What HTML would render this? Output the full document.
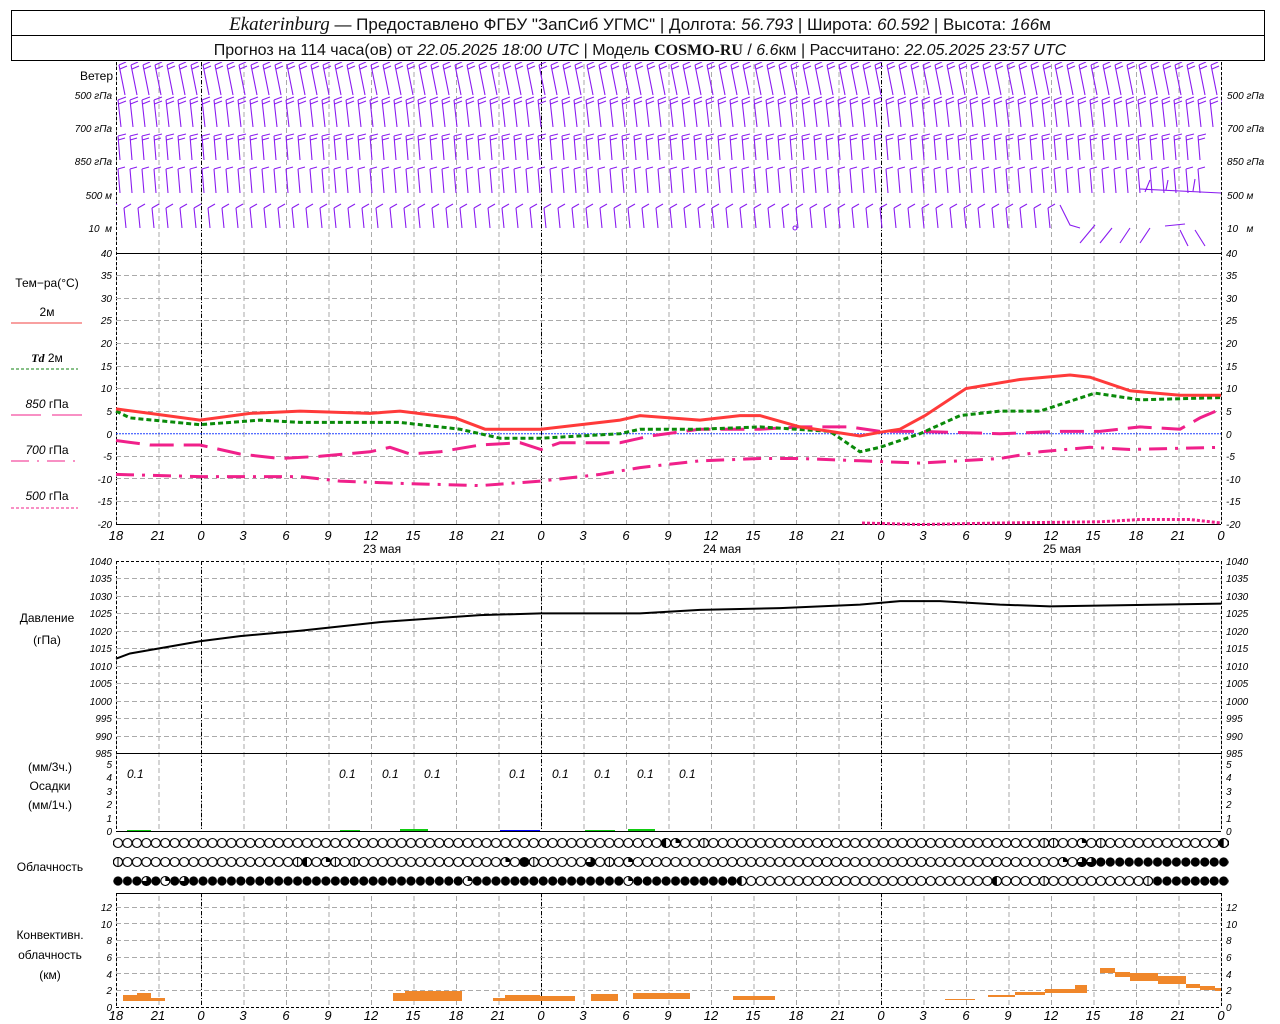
<!DOCTYPE html>
<html><head><meta charset="utf-8"><style>
html,body{margin:0;padding:0;background:#fff;}
svg{display:block;font-family:"Liberation Sans",sans-serif;}
.l{font-size:10px;font-style:italic;}
.t{font-size:12px;}
</style></head><body>
<svg width="1280" height="1024" viewBox="0 0 1280 1024" xmlns="http://www.w3.org/2000/svg">
<defs>
<pattern id="vg" patternUnits="userSpaceOnUse" x="116" y="0" width="42.5" height="1024"><line x1="0.5" y1="0" x2="0.5" y2="1024" stroke="#aaa" stroke-dasharray="5,3"/></pattern>
<pattern id="w0" patternUnits="userSpaceOnUse" x="116" y="62" width="12" height="34"><g stroke="#8a1cf0" stroke-width="1.1" fill="none"><path d="M9,33L3,3M3,3L10,0M4,7L11,4"/></g></pattern>
<pattern id="w1" patternUnits="userSpaceOnUse" x="116" y="96" width="12" height="33"><g stroke="#8a1cf0" stroke-width="1.1" fill="none"><path d="M5,31L2,4M2,4L10,1M2.5,8L10,5"/></g></pattern>
<pattern id="w2" patternUnits="userSpaceOnUse" x="116" y="133" width="12" height="29"><g stroke="#8a1cf0" stroke-width="1.1" fill="none"><path d="M4,27L2,3M2,3L10,1M2.3,7L9,5"/></g></pattern>
<pattern id="w3" patternUnits="userSpaceOnUse" x="116" y="166" width="12" height="29"><g stroke="#8a1cf0" stroke-width="1.1" fill="none"><path d="M4,27L2,3M2,3L9,1"/></g></pattern>
<pattern id="w4" patternUnits="userSpaceOnUse" x="122" y="203" width="14" height="27"><g stroke="#8a1cf0" stroke-width="1.1" fill="none"><path d="M4,25L2,5M2,5L9,1"/></g></pattern>
<pattern id="ce" patternUnits="userSpaceOnUse" x="113.275" y="0" width="9.45" height="1024"><circle cx="4.725" cy="843" r="4.5" fill="#fff" stroke="#000" stroke-width="1.1"/><circle cx="4.725" cy="862" r="4.5" fill="#fff" stroke="#000" stroke-width="1.1"/><circle cx="4.725" cy="881" r="4.5" fill="#fff" stroke="#000" stroke-width="1.1"/></pattern>
<pattern id="cf" patternUnits="userSpaceOnUse" x="113.275" y="0" width="9.45" height="1024"><circle cx="4.725" cy="881" r="4.6" fill="#000"/><circle cx="4.725" cy="862" r="4.6" fill="#000"/></pattern>
<g id="o"><circle r="4.5" fill="#fff" stroke="#000" stroke-width="1.1"/></g>
<g id="h"><circle r="4.5" fill="#fff" stroke="#000" stroke-width="1.1"/><path d="M0,-4.6A4.6,4.6 0 0 0 0,4.6Z" fill="#000"/></g>
<g id="q"><circle r="4.5" fill="#fff" stroke="#000" stroke-width="1.1"/><path d="M0,0L0,-4.6A4.6,4.6 0 0 1 4.6,0Z" fill="#000"/></g>
<g id="t"><circle r="4.5" fill="#fff" stroke="#000" stroke-width="1.1"/><path d="M0,0L0,-4.6A4.6,4.6 0 1 1 -4.6,0Z" fill="#000"/></g>
<g id="v"><circle r="4.5" fill="#fff" stroke="#000" stroke-width="1.1"/><line x1="0" y1="-4.5" x2="0" y2="4.5" stroke="#000"/></g>
<g id="f"><circle r="4.6" fill="#000"/></g>
</defs>
<rect x="0" y="0" width="1280" height="1024" fill="#fff"/>
<rect x="11.5" y="10.5" width="1253" height="50" fill="none" stroke="#000"/>
<line x1="11" y1="35.5" x2="1265" y2="35.5" stroke="#000"/>
<text x="640" y="30" text-anchor="middle" font-size="17" fill="#111"><tspan font-family="Liberation Serif" font-style="italic" font-size="19">Ekaterinburg</tspan> — Предоставлено ФГБУ "ЗапСиб УГМС" | Долгота: <tspan font-style="italic">56.793</tspan> | Широта: <tspan font-style="italic">60.592</tspan> | Высота: <tspan font-style="italic">166</tspan>м</text>
<text x="640" y="55" text-anchor="middle" font-size="16" fill="#111">Прогноз на 114 часа(ов) от <tspan font-style="italic">22.05.2025 18:00 UTC</tspan> | Модель <tspan font-family="Liberation Serif" font-weight="bold">COSMO-RU</tspan> / <tspan font-style="italic">6.6</tspan>км | Рассчитано: <tspan font-style="italic">22.05.2025 23:57 UTC</tspan></text>

<!-- vertical grids -->
<rect x="116" y="62" width="1106" height="191" fill="url(#vg)"/>
<rect x="116" y="253" width="1106" height="271" fill="url(#vg)"/>
<rect x="116" y="561" width="1106" height="270" fill="url(#vg)"/>
<rect x="116" y="893" width="1106" height="114" fill="url(#vg)"/>
<g stroke="#000" stroke-dasharray="4,2,1,2">
<line x1="201.5" y1="62" x2="201.5" y2="524"/><line x1="541.5" y1="62" x2="541.5" y2="524"/><line x1="881.5" y1="62" x2="881.5" y2="524"/>
<line x1="201.5" y1="561" x2="201.5" y2="831"/><line x1="541.5" y1="561" x2="541.5" y2="831"/><line x1="881.5" y1="561" x2="881.5" y2="831"/>
<line x1="201.5" y1="893" x2="201.5" y2="1007"/><line x1="541.5" y1="893" x2="541.5" y2="1007"/><line x1="881.5" y1="893" x2="881.5" y2="1007"/>
</g>
<g stroke="#000" stroke-dasharray="3,2">
<line x1="116.5" y1="62" x2="116.5" y2="524"/><line x1="1221.5" y1="62" x2="1221.5" y2="524"/>
<line x1="116.5" y1="561" x2="116.5" y2="831"/><line x1="1221.5" y1="561" x2="1221.5" y2="831"/>
<line x1="116.5" y1="893" x2="116.5" y2="1007"/><line x1="1221.5" y1="893" x2="1221.5" y2="1007"/>
</g>
<!-- horizontal grid -->
<g stroke="#aaa" stroke-dasharray="5,3">
<line x1="116" y1="275.5" x2="1221" y2="275.5"/><line x1="116" y1="298.5" x2="1221" y2="298.5"/><line x1="116" y1="320.5" x2="1221" y2="320.5"/><line x1="116" y1="343.5" x2="1221" y2="343.5"/><line x1="116" y1="366.5" x2="1221" y2="366.5"/><line x1="116" y1="388.5" x2="1221" y2="388.5"/><line x1="116" y1="411.5" x2="1221" y2="411.5"/><line x1="116" y1="456.5" x2="1221" y2="456.5"/><line x1="116" y1="478.5" x2="1221" y2="478.5"/><line x1="116" y1="501.5" x2="1221" y2="501.5"/>
<line x1="116" y1="578.5" x2="1221" y2="578.5"/><line x1="116" y1="596.5" x2="1221" y2="596.5"/><line x1="116" y1="613.5" x2="1221" y2="613.5"/><line x1="116" y1="631.5" x2="1221" y2="631.5"/><line x1="116" y1="648.5" x2="1221" y2="648.5"/><line x1="116" y1="666.5" x2="1221" y2="666.5"/><line x1="116" y1="683.5" x2="1221" y2="683.5"/><line x1="116" y1="701.5" x2="1221" y2="701.5"/><line x1="116" y1="718.5" x2="1221" y2="718.5"/><line x1="116" y1="736.5" x2="1221" y2="736.5"/>
<line x1="116" y1="990.5" x2="1221" y2="990.5"/><line x1="116" y1="973.5" x2="1221" y2="973.5"/><line x1="116" y1="957.5" x2="1221" y2="957.5"/><line x1="116" y1="940.5" x2="1221" y2="940.5"/><line x1="116" y1="923.5" x2="1221" y2="923.5"/><line x1="116" y1="907.5" x2="1221" y2="907.5"/>
</g>
<g stroke="#000">
<line x1="116" y1="253.5" x2="1221" y2="253.5"/><line x1="116" y1="524.5" x2="1221" y2="524.5"/><line x1="116" y1="561.5" x2="1221" y2="561.5" stroke-dasharray="3,2"/><line x1="116" y1="753.5" x2="1221" y2="753.5"/><line x1="116" y1="831.5" x2="1221" y2="831.5"/><line x1="116" y1="893.5" x2="1221" y2="893.5"/><line x1="116" y1="1007.5" x2="1221" y2="1007.5" stroke-dasharray="3,2"/>
</g>
<line x1="116" y1="433.7" x2="1221" y2="433.7" stroke="#2040ff" stroke-dasharray="2,1"/>

<!-- wind barbs -->
<rect x="116" y="62" width="1106" height="34" fill="url(#w0)"/>
<rect x="116" y="96" width="1106" height="33" fill="url(#w1)"/>
<rect x="116" y="133" width="1090" height="29" fill="url(#w2)"/>
<rect x="116" y="166" width="1090" height="29" fill="url(#w3)"/>
<rect x="116" y="203" width="944" height="27" fill="url(#w4)"/>
<g stroke="#8a1cf0" stroke-width="1.1" fill="none">
<path d="M1140,189L1221,193M1150,180L1145,192M1168,180L1166,190M1195,179L1193,191M1080,243L1095,225M1100,243L1112,228M1120,243L1130,228M1140,243L1150,228M1180,230L1188,246M1195,230L1205,246M1165,226L1185,224M1060,205L1070,225L1080,228"/>
<circle cx="795" cy="228" r="2"/>
</g>

<!-- temperature curves -->
<g fill="none" stroke-width="3">
<path stroke="#f0208a" stroke-dasharray="3,2" d="M862,523L920,524.5L1000,523L1100,521.8L1140,519.5L1190,519.5L1221,523"/>
<path stroke="#f0208a" stroke-dasharray="18,8,3,8" d="M116,474.4L200,476.6L300,476.6L340,481.1L400,483.4L480,485.6L541,481.1L600,474.4L640,467.6L700,460.8L760,458.5L800,458.5L860,460.8L920,463.1L1000,458.5L1040,451.8L1090,447.3L1130,449.5L1221,447.3"/>
<path stroke="#f0208a" stroke-dasharray="24,10" d="M116,440.5L150,445L200,445L240,454L280,458.5L320,456.3L370,451.8L390,447.3L410,454L440,451.8L480,445L520,442.7L541,449.5L560,442.7L620,442.7L650,436L700,429.2L760,429.2L800,426.9L850,426.9L880,431.4L920,431.4L1000,433.7L1060,431.4L1100,431.4L1140,426.9L1180,429.2L1200,417.9L1221,408.9"/>
<path stroke="#0a8a0a" stroke-dasharray="5,3" d="M116,411.1L130,417.9L200,424.7L260,420.1L300,422.4L400,422.4L460,429.2L500,438.2L541,438.2L620,433.7L640,429.2L700,429.2L760,426.9L830,431.4L860,451.8L880,447.3L920,433.7L960,415.6L1000,411.1L1040,411.1L1095,393.1L1140,399.8L1221,397.6"/>
<path stroke="#ff3a3a" d="M116,408.9L150,413.4L200,420.1L250,413.4L300,411.1L370,413.4L400,411.1L455,417.9L485,429.2L541,429.2L580,424.7L620,420.1L640,415.6L700,420.1L740,415.6L760,415.6L800,426.9L830,431.4L860,436L880,432.3L900,429.2L925,415.6L966,388.5L1020,379.5L1070,375L1090,377.2L1130,390.8L1180,395.3L1221,395.3"/>
</g>
<!-- pressure -->
<path fill="none" stroke="#000" stroke-width="2" d="M116,658.7L130,653.5L200,641.3L240,636.1L300,630.8L380,622.1L480,615.1L541,613.4L640,613.4L700,609.9L780,608.1L860,604.6L900,601.1L940,601.1L1000,604.6L1050,606.4L1221,603.6"/>

<!-- precip bars -->
<g fill="#1c1"><rect x="127" y="830" width="24" height="1"/><rect x="340" y="830" width="20" height="1"/><rect x="400" y="829" width="28" height="2"/><rect x="585" y="830" width="30" height="1"/><rect x="628" y="829" width="27" height="2"/></g>
<rect x="500" y="830" width="40" height="1" fill="#00f"/>

<!-- clouds -->
<rect x="113" y="836" width="1116" height="52" fill="url(#ce)"/>
<rect x="113" y="874" width="632" height="14" fill="#fff"/>
<rect x="113" y="874" width="632" height="14" fill="url(#cf)"/>
<rect x="1153" y="874" width="76" height="14" fill="#fff"/>
<rect x="1153" y="874" width="76" height="14" fill="url(#cf)"/>
<rect x="1096" y="855" width="133" height="14" fill="#fff"/>
<rect x="1096" y="855" width="133" height="14" fill="url(#cf)"/>
<use href="#h" x="666.1" y="843"/><use href="#q" x="675.6" y="843"/><use href="#v" x="703.9" y="843"/><use href="#v" x="1044.1" y="843"/><use href="#v" x="1053.6" y="843"/><use href="#q" x="1081.9" y="843"/><use href="#v" x="1100.8" y="843"/><use href="#h" x="1223.7" y="843"/>
<use href="#v" x="118" y="862"/><use href="#v" x="297.6" y="862"/><use href="#h" x="307" y="862"/><use href="#q" x="325.9" y="862"/><use href="#v" x="335.4" y="862"/><use href="#v" x="354.3" y="862"/><use href="#q" x="505.5" y="862"/><use href="#f" x="524.4" y="862"/><use href="#v" x="533.8" y="862"/><use href="#t" x="590.5" y="862"/><use href="#v" x="609.4" y="862"/><use href="#q" x="628.3" y="862"/><use href="#q" x="1063" y="862"/><use href="#t" x="1081.9" y="862"/><use href="#t" x="1091.4" y="862"/>
<use href="#t" x="146.4" y="881"/><use href="#q" x="165.3" y="881"/><use href="#t" x="184.2" y="881"/><use href="#q" x="467.7" y="881"/><use href="#q" x="628.3" y="881"/><use href="#h" x="741.7" y="881"/><use href="#h" x="996.9" y="881"/><use href="#v" x="1044.1" y="881"/><use href="#v" x="1148" y="881"/>

<!-- convective bars -->
<g fill="#f0872a">
<rect x="123" y="995" width="14" height="6"/><rect x="137" y="993" width="14" height="8"/><rect x="151" y="998" width="14" height="3"/><rect x="393" y="993" width="12" height="8"/><rect x="405" y="991" width="57" height="10"/><rect x="493" y="998" width="12" height="3"/><rect x="505" y="995" width="35" height="6"/><rect x="540" y="996" width="35" height="5"/><rect x="591" y="994" width="27" height="7"/><rect x="633" y="993" width="57" height="6"/><rect x="733" y="996" width="42" height="4"/><rect x="945" y="999" width="30" height="1"/><rect x="988" y="995" width="27" height="2"/><rect x="1015" y="992" width="30" height="3"/><rect x="1045" y="989" width="30" height="4"/><rect x="1075" y="985" width="12" height="8"/><rect x="1100" y="968" width="15" height="5"/><rect x="1115" y="972" width="15" height="5"/><rect x="1130" y="973" width="28" height="8"/><rect x="1158" y="976" width="28" height="8"/><rect x="1186" y="984" width="14" height="4"/><rect x="1200" y="986" width="15" height="4"/><rect x="1215" y="988" width="6" height="3"/>
</g>

<!-- wind labels -->
<g text-anchor="end" fill="#000">
<text x="113" y="80" font-size="12">Ветер</text>
<g class="l"><text x="112" y="99">500 гПа</text><text x="112" y="132">700 гПа</text><text x="112" y="165">850 гПа</text><text x="112" y="199">500 м</text><text x="112" y="232">10 &#160;м</text></g>
</g>
<g class="l" fill="#000">
<text x="1227" y="99">500 гПа</text><text x="1227" y="132">700 гПа</text><text x="1227" y="165">850 гПа</text><text x="1227" y="199">500 м</text><text x="1227" y="232">10 &#160;&#160;м</text>
</g>
<!-- legends -->
<g class="t" text-anchor="middle" fill="#000">
<text x="47" y="287">Тем−ра(°С)</text>
<text x="47" y="316">2м</text>
<text x="47" y="362"><tspan font-style="italic" font-weight="bold" font-family="Liberation Serif">Td</tspan>  2м</text>
<text x="47" y="408"><tspan font-style="italic">850</tspan> гПа</text>
<text x="47" y="454"><tspan font-style="italic">700</tspan> гПа</text>
<text x="47" y="500"><tspan font-style="italic">500</tspan> гПа</text>
<text x="47" y="622">Давление</text>
<text x="47" y="644">(гПа)</text>
<text x="50" y="771">(мм/3ч.)</text>
<text x="50" y="790">Осадки</text>
<text x="50" y="809">(мм/1ч.)</text>
<text x="50" y="871">Облачность</text>
<text x="50" y="939">Конвективн.</text>
<text x="50" y="959">облачность</text>
<text x="50" y="979">(км)</text>
</g>
<line x1="11" y1="323" x2="82" y2="323" stroke="#f04040"/>
<line x1="11" y1="369" x2="78" y2="369" stroke="#108010" stroke-dasharray="3,2"/>
<line x1="11" y1="415" x2="41" y2="415" stroke="#f0208a"/><line x1="52" y1="415" x2="82" y2="415" stroke="#f0208a"/>
<line x1="11" y1="461" x2="82" y2="461" stroke="#f0208a" stroke-dasharray="18,8,2,8"/>
<line x1="11" y1="508" x2="78" y2="508" stroke="#f0208a" stroke-dasharray="3,2"/>
<!-- precip labels -->
<g font-style="italic" font-size="12" fill="#000">
<text x="127" y="778">0.1</text><text x="339" y="778">0.1</text><text x="382" y="778">0.1</text><text x="424" y="778">0.1</text><text x="509" y="778">0.1</text><text x="552" y="778">0.1</text><text x="594" y="778">0.1</text><text x="637" y="778">0.1</text><text x="679" y="778">0.1</text>
</g>
<g font-size="12" fill="#000"><text x="363" y="553">23 мая</text><text x="703" y="553">24 мая</text><text x="1043" y="553">25 мая</text></g>
<!-- axis tick labels -->
<g class="l" fill="#000" text-anchor="end">
<text x="112" y="257">40</text><text x="112" y="279">35</text><text x="112" y="302">30</text><text x="112" y="324">25</text><text x="112" y="347">20</text><text x="112" y="370">15</text><text x="112" y="392">10</text><text x="112" y="415">5</text><text x="112" y="438">0</text><text x="112" y="460">-5</text><text x="112" y="483">-10</text><text x="112" y="505">-15</text><text x="112" y="528">-20</text>
<text x="112" y="565">1040</text><text x="112" y="582">1035</text><text x="112" y="600">1030</text><text x="112" y="617">1025</text><text x="112" y="635">1020</text><text x="112" y="652">1015</text><text x="112" y="670">1010</text><text x="112" y="687">1005</text><text x="112" y="705">1000</text><text x="112" y="722">995</text><text x="112" y="740">990</text><text x="112" y="757">985</text>
<text x="112" y="768">5</text><text x="112" y="781">4</text><text x="112" y="795">3</text><text x="112" y="808">2</text><text x="112" y="822">1</text><text x="112" y="835">0</text>
<text x="112" y="911">12</text><text x="112" y="928">10</text><text x="112" y="944">8</text><text x="112" y="961">6</text><text x="112" y="978">4</text><text x="112" y="994">2</text><text x="112" y="1011">0</text>
</g>
<g class="l" fill="#000">
<text x="1226" y="257">40</text><text x="1226" y="279">35</text><text x="1226" y="302">30</text><text x="1226" y="324">25</text><text x="1226" y="347">20</text><text x="1226" y="370">15</text><text x="1226" y="392">10</text><text x="1226" y="415">5</text><text x="1226" y="438">0</text><text x="1226" y="460">-5</text><text x="1226" y="483">-10</text><text x="1226" y="505">-15</text><text x="1226" y="528">-20</text>
<text x="1226" y="565">1040</text><text x="1226" y="582">1035</text><text x="1226" y="600">1030</text><text x="1226" y="617">1025</text><text x="1226" y="635">1020</text><text x="1226" y="652">1015</text><text x="1226" y="670">1010</text><text x="1226" y="687">1005</text><text x="1226" y="705">1000</text><text x="1226" y="722">995</text><text x="1226" y="740">990</text><text x="1226" y="757">985</text>
<text x="1226" y="768">5</text><text x="1226" y="781">4</text><text x="1226" y="795">3</text><text x="1226" y="808">2</text><text x="1226" y="822">1</text><text x="1226" y="835">0</text>
<text x="1226" y="911">12</text><text x="1226" y="928">10</text><text x="1226" y="944">8</text><text x="1226" y="961">6</text><text x="1226" y="978">4</text><text x="1226" y="994">2</text><text x="1226" y="1011">0</text>
</g>
<g font-style="italic" font-size="13" text-anchor="middle" fill="#000">
<text x="116" y="540">18</text><text x="158" y="540">21</text><text x="201" y="540">0</text><text x="243" y="540">3</text><text x="286" y="540">6</text><text x="328" y="540">9</text><text x="371" y="540">12</text><text x="413" y="540">15</text><text x="456" y="540">18</text><text x="498" y="540">21</text><text x="541" y="540">0</text><text x="583" y="540">3</text><text x="626" y="540">6</text><text x="668" y="540">9</text><text x="711" y="540">12</text><text x="753" y="540">15</text><text x="796" y="540">18</text><text x="838" y="540">21</text><text x="881" y="540">0</text><text x="923" y="540">3</text><text x="966" y="540">6</text><text x="1008" y="540">9</text><text x="1051" y="540">12</text><text x="1093" y="540">15</text><text x="1136" y="540">18</text><text x="1178" y="540">21</text><text x="1221" y="540">0</text>
<text x="116" y="1020">18</text><text x="158" y="1020">21</text><text x="201" y="1020">0</text><text x="243" y="1020">3</text><text x="286" y="1020">6</text><text x="328" y="1020">9</text><text x="371" y="1020">12</text><text x="413" y="1020">15</text><text x="456" y="1020">18</text><text x="498" y="1020">21</text><text x="541" y="1020">0</text><text x="583" y="1020">3</text><text x="626" y="1020">6</text><text x="668" y="1020">9</text><text x="711" y="1020">12</text><text x="753" y="1020">15</text><text x="796" y="1020">18</text><text x="838" y="1020">21</text><text x="881" y="1020">0</text><text x="923" y="1020">3</text><text x="966" y="1020">6</text><text x="1008" y="1020">9</text><text x="1051" y="1020">12</text><text x="1093" y="1020">15</text><text x="1136" y="1020">18</text><text x="1178" y="1020">21</text><text x="1221" y="1020">0</text>
</g>
</svg>
</body></html>
